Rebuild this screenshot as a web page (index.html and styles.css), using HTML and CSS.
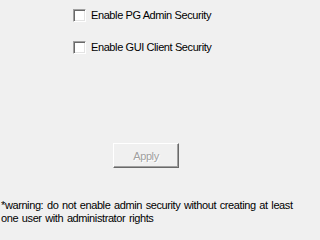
FILE: index.html
```html
<!DOCTYPE html>
<html>
<head>
<meta charset="utf-8">
<link rel="stylesheet" href="styles.css">
</head>
<body>
<div class="panel">
  <div class="options">
    <label class="check"><span class="box"></span><span class="label">Enable PG Admin Security</span></label>
    <label class="check"><span class="box"></span><span class="label">Enable GUI Client Security</span></label>
  </div>
  <div class="actions">
    <div class="button">Apply</div>
  </div>
  <p class="warning">*warning: do not enable admin security without creating at least one user with administrator rights</p>
</div>
</body>
</html>
```
FILE: styles.css
```css
html, body {
  margin: 0;
  padding: 0;
  background: #f0f0f0;
}
.panel {
  width: 301px;
  height: 227px;
  font-family: "Liberation Sans", Arial, sans-serif;
  font-size: 11px;
  letter-spacing: -0.4px;
  color: #000;
  display: flex;
  flex-direction: column;
}
.options {
  display: flex;
  flex-direction: column;
  gap: 19px;
  padding: 9px 0 0 73px;
}
.check {
  display: flex;
  align-items: center;
  height: 13px;
}
.box {
  width: 13px;
  height: 13px;
  box-sizing: border-box;
  border: 1px solid;
  border-color: #a0a0a0 #ffffff #ffffff #a0a0a0;
  background: #fff;
  box-shadow: inset 1px 1px 0 #696969, inset -1px -1px 0 #e3e3e3;
  flex: none;
}
.label {
  margin-left: 5px;
  line-height: 13px;
}
.actions {
  padding: 89px 0 0 113px;
}
.button {
  width: 66px;
  height: 25px;
  box-sizing: border-box;
  border: 1px solid;
  border-color: #ffffff #696969 #696969 #ffffff;
  box-shadow: inset -1px -1px 0 #a0a0a0;
  display: flex;
  align-items: center;
  justify-content: center;
  color: #a0a0a0;
  text-shadow: 1px 1px 0 #ffffff;
}
.warning {
  margin: 31px 0 0 1px;
  line-height: 13px;
  word-spacing: 1px;
}
```
